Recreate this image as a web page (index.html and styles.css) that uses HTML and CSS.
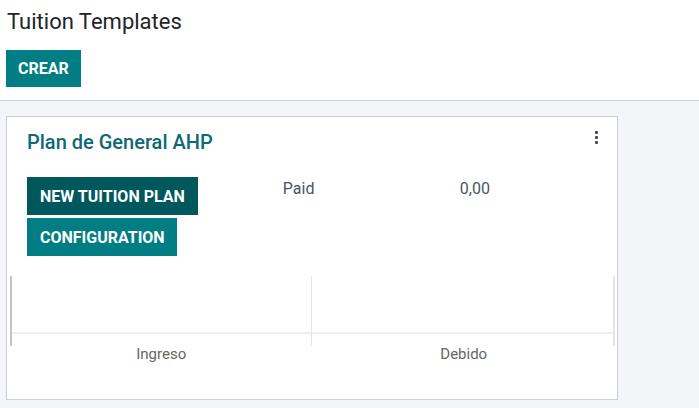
FILE: index.html
```html
<!DOCTYPE html>
<html>
<head>
<meta charset="utf-8">
<link rel="stylesheet" href="styles.css">
</head>
<body>
<div class="control-panel">
  <h1 class="title">Tuition Templates</h1>
  <button class="btn btn-primary btn-create">CREAR</button>
</div>
<div class="content">
  <div class="card">
    <div class="card-head">
      <div class="card-title">Plan de General AHP</div>
      <div class="dots"><span></span><span></span><span></span></div>
    </div>
    <div class="card-body">
      <div class="actions">
        <button class="btn btn-dark">NEW TUITION PLAN</button>
        <button class="btn btn-primary">CONFIGURATION</button>
      </div>
      <div class="stat">
        <span class="stat-label">Paid</span>
        <span class="stat-value">0,00</span>
      </div>
    </div>
    <div class="chart">
      <div class="plot">
        <div class="col col-left"><div class="area"></div><div class="tick"></div></div>
        <div class="col col-right"><div class="area"></div><div class="tick"></div></div>
      </div>
      <div class="labels"><span>Ingreso</span><span>Debido</span></div>
    </div>
  </div>
</div>
</body>
</html>
```
FILE: styles.css
```css
html, body {
  margin: 0;
  padding: 0;
  height: 100%;
}
body {
  font-family: Roboto, "Noto Sans", sans-serif;
  background: #f4f5f9;
  color: #4c4c4c;
}
.control-panel {
  background: #ffffff;
  border-bottom: 1px solid #d0d3da;
  padding: 7px 6px 13px;
}
.title {
  margin: 0 0 15px 1px;
  font-size: 22px;
  font-weight: 400;
  line-height: 29px;
  color: #212529;
}
.btn {
  border: none;
  font-family: Roboto, "Noto Sans", sans-serif;
  font-weight: 700;
  font-size: 16px;
  color: #ffffff;
  padding: 0 13px;
  height: 37px;
  display: block;
  cursor: pointer;
}
.btn-create {
  padding: 0 12px;
  margin-top: -1px;
}
.btn-primary {
  background: #017e84;
}
.btn-dark {
  background: #01585c;
}
.content {
  padding: 15px 6px 0;
}
.card {
  width: 610px;
  height: 282px;
  background: #ffffff;
  border: 1px solid #ccd0d6;
}
.card-head {
  display: flex;
  justify-content: space-between;
  padding: 12px 19px 0 20px;
}
.card-title {
  font-size: 20px;
  font-weight: 500;
  color: #0d6a73;
  line-height: 26px;
}
.dots {
  display: flex;
  flex-direction: column;
  gap: 2px;
  padding-top: 2px;
}
.dots span {
  width: 3px;
  height: 3px;
  background: #444b55;
  border-radius: 1px;
}
.card-body {
  display: flex;
  padding: 22px 0 0 20px;
}
.actions {
  display: flex;
  flex-direction: column;
  gap: 3px;
  align-items: flex-start;
}
.actions .btn {
  height: 38px;
}
.actions .btn-primary {
  padding: 0 12px 0 13px;
}
.stat {
  display: flex;
  padding: 2px 0 0 85px;
  font-size: 16px;
  color: #4a5566;
  line-height: 19px;
}
.stat-label {
  width: 177px;
}
.chart {
  margin: 20px 2px 0 3px;
}
.plot {
  display: grid;
  grid-template-columns: 1fr 1fr;
  border-right: 2px solid #e4e4e4;
}
.col-left {
  border-left: 2px solid #c4c4c4;
  border-right: 1px solid #e6e6e6;
}
.area {
  height: 56px;
  border-bottom: 2px solid #eeeeee;
}
.tick {
  height: 12px;
}
.labels {
  display: grid;
  grid-template-columns: 1fr 1fr;
  text-align: center;
  font-size: 15px;
  color: #666666;
  line-height: 17px;
}
```
